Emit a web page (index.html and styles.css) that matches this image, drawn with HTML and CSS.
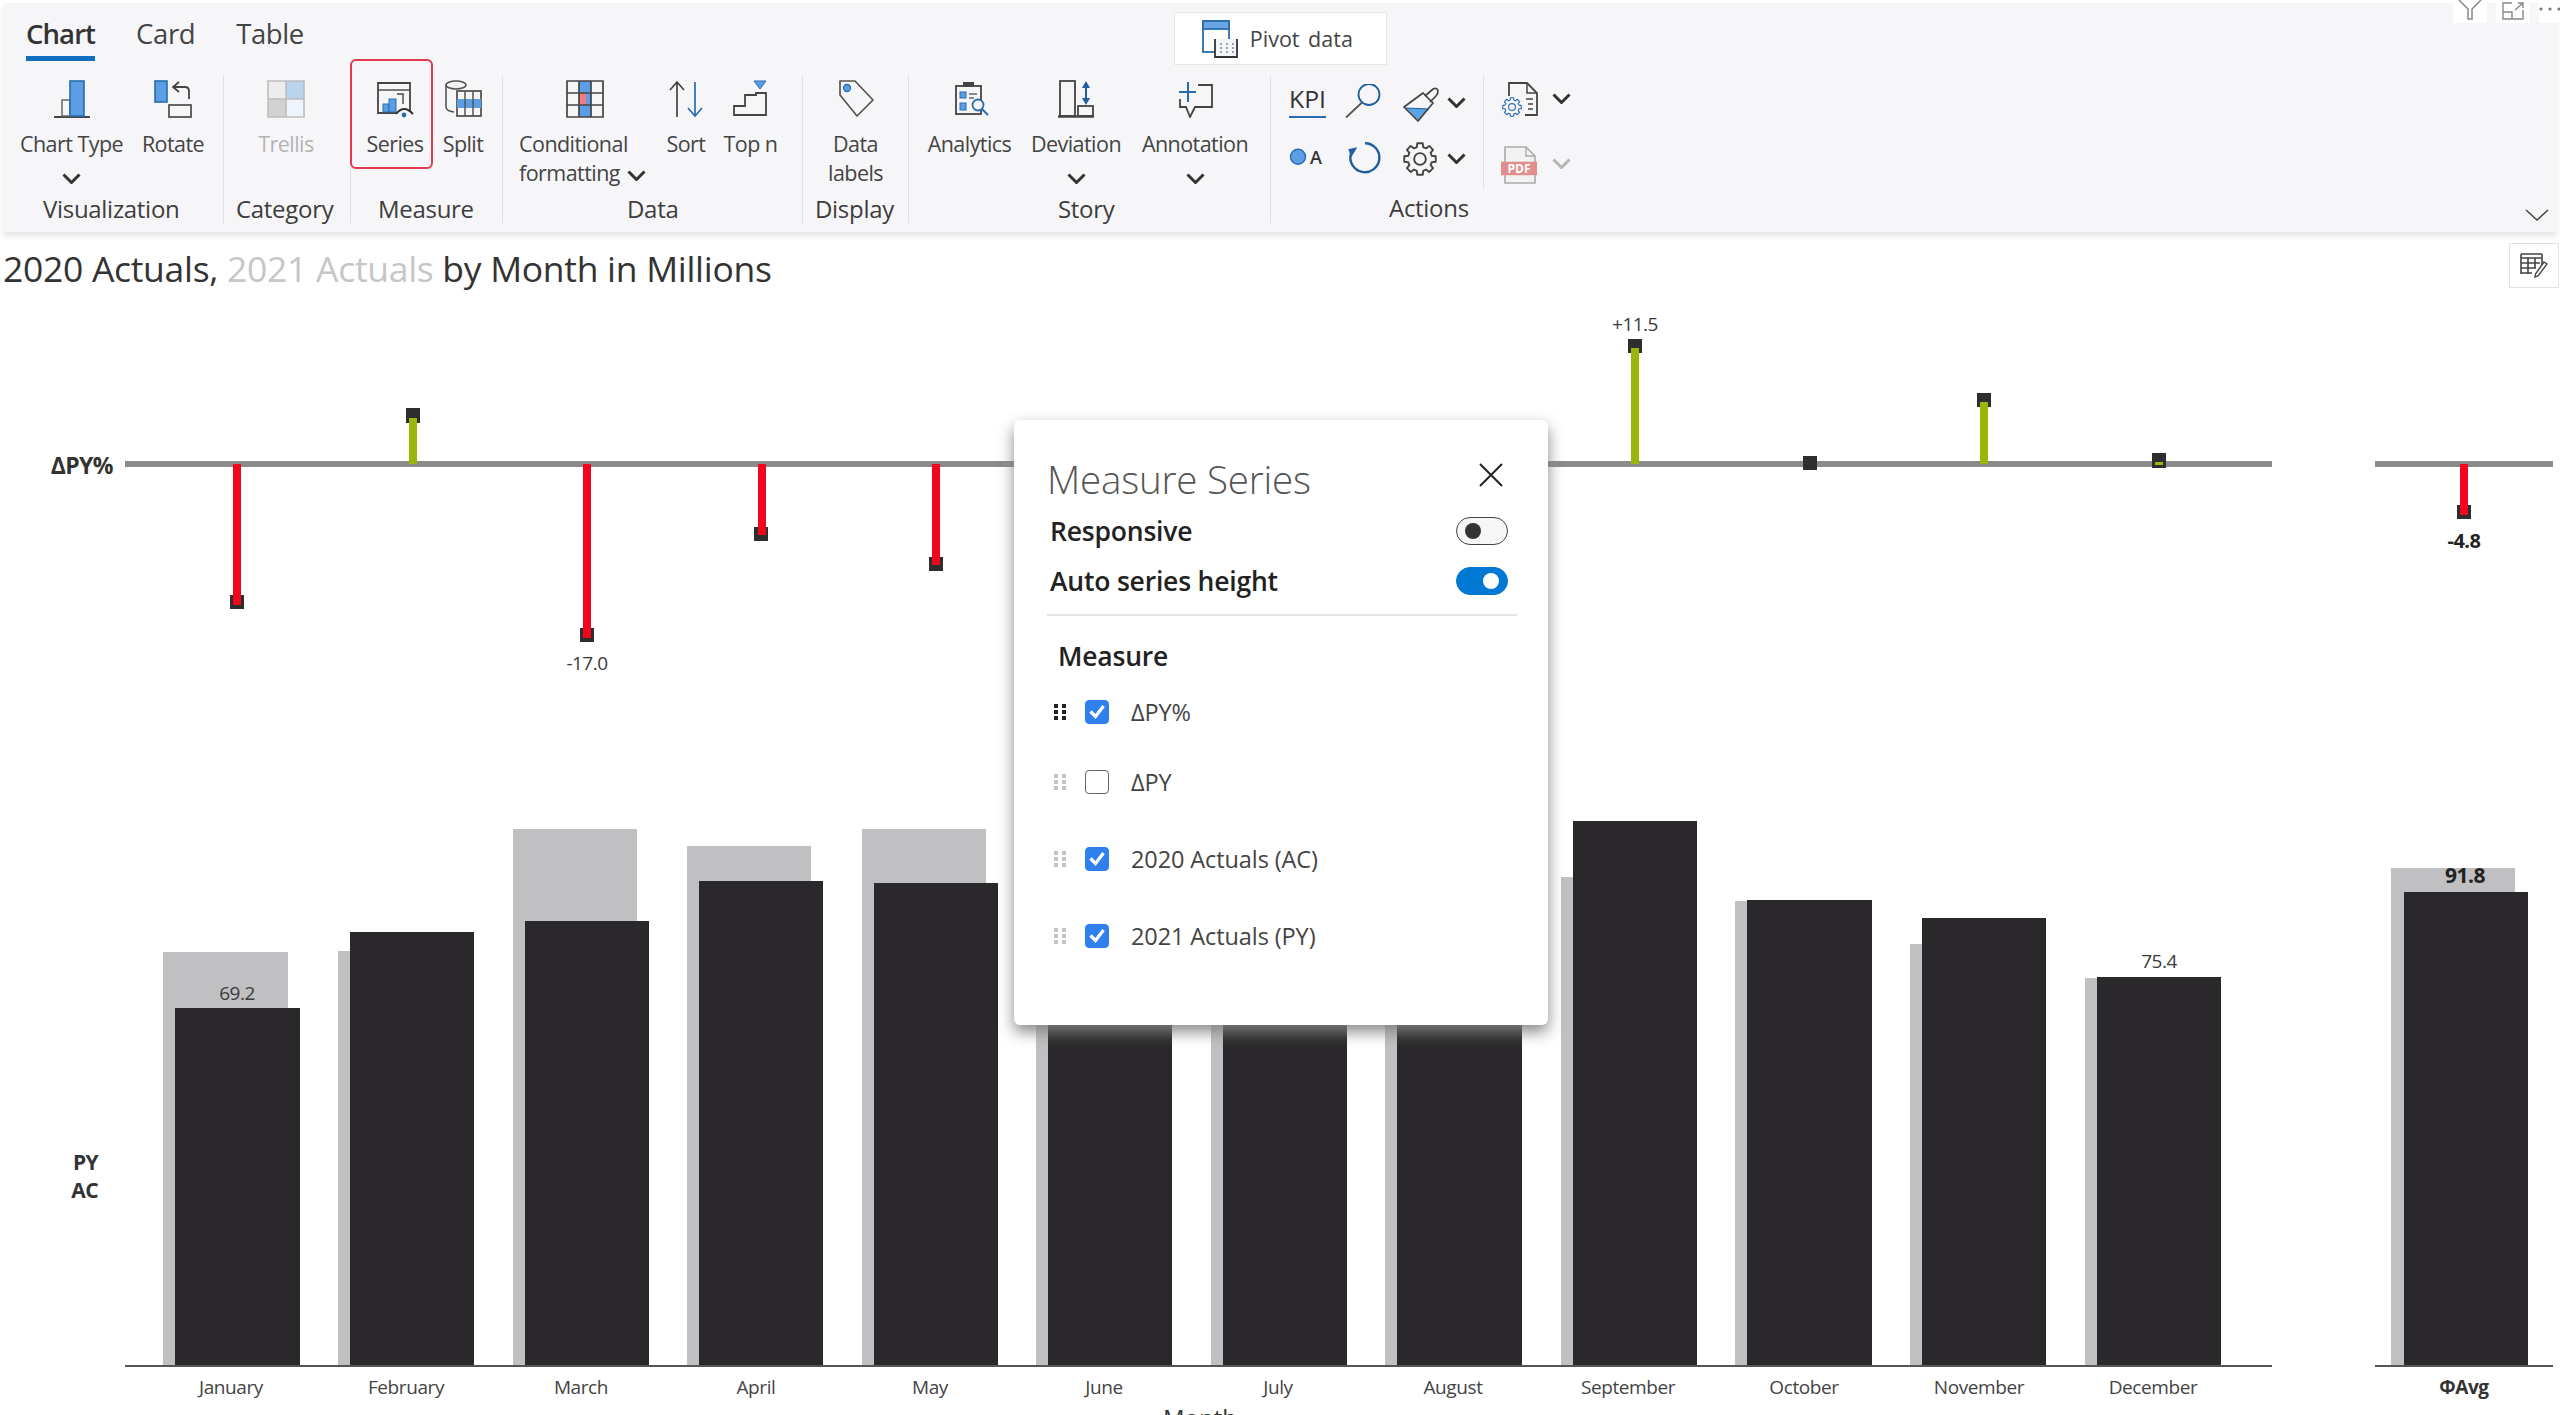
FILE: index.html
```html
<!DOCTYPE html>
<html lang="en">
<head>
<meta charset="utf-8">
<title>Measure Series</title>
<link rel="stylesheet" href="styles.css">
</head>
<body>
<svg class="defs" width="0" height="0" aria-hidden="true">
  <symbol id="gear" viewBox="-16 -16 32 32">
    <polygon fill="none" stroke="currentColor" stroke-width="1.8" stroke-linejoin="round" points="-3,-11.1 -2.6,-14.8 2.6,-14.8 3,-11.1 5.73,-9.97 8.63,-12.3 12.3,-8.63 9.97,-5.73 11.1,-3 14.8,-2.6 14.8,2.6 11.1,3 9.97,5.73 12.3,8.63 8.63,12.3 5.73,9.97 3,11.1 2.6,14.8 -2.6,14.8 -3,11.1 -5.73,9.97 -8.63,12.3 -12.3,8.63 -9.97,5.73 -11.1,3 -14.8,2.6 -14.8,-2.6 -11.1,-3 -9.97,-5.73 -12.3,-8.63 -8.63,-12.3 -5.73,-9.97"/>
    <circle r="5.5" fill="none" stroke="currentColor" stroke-width="1.8"/>
  </symbol>
  <symbol id="chev" viewBox="0 0 19 11">
    <polyline points="1.5,1.5 9.5,9.500 17.5,1.5" fill="none" stroke="currentColor" stroke-width="3"/>
  </symbol>
  <symbol id="grip" viewBox="0 0 12 16">
    <rect x="0" y="0" width="4" height="4"/><rect x="8" y="0" width="4" height="4"/>
    <rect x="0" y="6" width="4" height="4"/><rect x="8" y="6" width="4" height="4"/>
    <rect x="0" y="12" width="4" height="4"/><rect x="8" y="12" width="4" height="4"/>
  </symbol>
  <symbol id="tick" viewBox="0 0 24 24">
    <polyline points="5.5,12.5 10.5,17.5 18.5,7" fill="none" stroke="#fff" stroke-width="3.2"/>
  </symbol>
</svg>

<div class="page">
  <header class="ribbon">
    <div class="ribbon-head">
      <nav class="tabs">
        <span class="tab active">Chart</span>
        <span class="tab">Card</span>
        <span class="tab">Table</span>
      </nav>
      <div class="pivot">
        <svg class="pivot-ico" viewBox="0 0 36 38">
          <rect x="1" y="1" width="26" height="31" fill="#fff" stroke="#2a6cad" stroke-width="1.8"/>
          <rect x="1" y="1" width="26" height="8" fill="#6aa5e3" stroke="#2a6cad" stroke-width="1.8"/>
          <rect x="13" y="19" width="22" height="18" fill="#f6f6f8"/>
          <path d="M13 19V37H35V19" fill="none" stroke="#333" stroke-width="1.8"/>
          <path d="M18 24h2M24 24h2M30 24h2M18 28h2M24 28h2M30 28h2M18 32h2M24 32h2M30 32h2" stroke="#8fa8c4" stroke-width="2"/>
        </svg>
        <span class="pivot-text">Pivot data</span>
      </div>
    </div>

    <div class="ribbon-body">
      <section class="group g-vis">
        <div class="tools">
          <div class="tool w-type">
            <svg class="ico" viewBox="0 0 38 38"><path d="M1 37H37" stroke="#444" stroke-width="2"/><rect x="9" y="20" width="8" height="16" fill="none" stroke="#666" stroke-width="1.5"/><rect x="17" y="1" width="14" height="35" fill="#5b9ee6" stroke="#2a6cad" stroke-width="1.6"/></svg>
            <span class="lbl">Chart Type</span>
            <svg class="chev"><use href="#chev"/></svg>
          </div>
          <div class="tool w-rotate">
            <svg class="ico" viewBox="0 0 38 38"><rect x="1" y="1" width="12" height="21" fill="#5b9ee6" stroke="#2a6cad" stroke-width="1.6"/><rect x="15" y="25" width="22" height="12" fill="none" stroke="#555" stroke-width="1.8"/><path d="M35 19V11Q35 7 31 7H20M25 2L19 7L25 12" fill="none" stroke="#444" stroke-width="1.8"/></svg>
            <span class="lbl">Rotate</span>
          </div>
        </div>
        <div class="group-label lab-vis">Visualization</div>
      </section>

      <section class="group g-cat">
        <div class="tools">
          <div class="tool w-trellis">
            <svg class="ico" viewBox="0 0 38 38"><rect x="1" y="1" width="18" height="18" fill="#ededed"/><rect x="19" y="1" width="18" height="18" fill="#b8d4ee"/><rect x="1" y="19" width="18" height="18" fill="#d2d2d2"/><rect x="19" y="19" width="18" height="18" fill="#eef4fb"/><path d="M1 1H37V37H1ZM19 1V37M1 19H37" fill="none" stroke="#bdbdbd" stroke-width="1.6"/></svg>
            <span class="lbl muted">Trellis</span>
          </div>
        </div>
        <div class="group-label lab-cat">Category</div>
      </section>

      <section class="group g-mea">
        <div class="series-mark"></div>
        <div class="tools">
          <div class="tool w-series">
            <svg class="ico" viewBox="0 0 38 38"><path d="M2 3H34V33H2Z" fill="none" stroke="#444" stroke-width="1.8"/><path d="M2 10H34" stroke="#444" stroke-width="1.4"/><rect x="7" y="24" width="6" height="8" fill="#5b9ee6" stroke="#2a6cad"/><rect x="13" y="19" width="7" height="13" fill="#5b9ee6" stroke="#2a6cad"/><path d="M21 14H27V24" fill="none" stroke="#444" stroke-width="1.4"/><path d="M20 34Q28 24 37 34" fill="#f6f6f8" stroke="#333" stroke-width="2"/><circle cx="28" cy="35" r="2.4" fill="#2a6cad"/></svg>
            <span class="lbl">Series</span>
          </div>
          <div class="tool w-split">
            <svg class="ico" viewBox="0 0 38 38"><ellipse cx="12" cy="5" rx="10" ry="4" fill="none" stroke="#555" stroke-width="1.6"/><path d="M2 5V27Q2 31 10 32" fill="none" stroke="#555" stroke-width="1.6"/><rect x="13" y="11" width="24" height="25" fill="#f6f6f8" stroke="#555" stroke-width="1.8"/><rect x="13" y="19" width="24" height="9" fill="#5b9ee6"/><path d="M21 11V36M29 11V36" stroke="#555" stroke-width="1.5"/></svg>
            <span class="lbl">Split</span>
          </div>
        </div>
        <div class="group-label lab-mea">Measure</div>
      </section>

      <section class="group g-data">
        <div class="tools">
          <div class="tool w-cf">
            <svg class="ico" viewBox="0 0 38 38"><rect x="1" y="1" width="36" height="36" fill="#f6f6f8"/><rect x="13" y="1" width="12" height="12" fill="#5b9ee6"/><rect x="13" y="13" width="7" height="12" fill="#f47c7c"/><rect x="20" y="13" width="5" height="12" fill="#5b9ee6"/><rect x="13" y="25" width="12" height="12" fill="#5b9ee6"/><path d="M1 1H37V37H1ZM13 1V37M25 1V37M1 13H37M1 25H37" fill="none" stroke="#444" stroke-width="1.7"/></svg>
            <span class="lbl">Conditional</span>
            <span class="lbl">formatting <svg class="chev inline"><use href="#chev"/></svg></span>
          </div>
          <div class="tool w-sort">
            <svg class="ico" viewBox="0 0 38 38"><path d="M10 37V2M3 10L10 2L17 10" fill="none" stroke="#444" stroke-width="1.7"/><path d="M28 2V36M21 28L28 36L35 28" fill="none" stroke="#2a6cad" stroke-width="1.7"/></svg>
            <span class="lbl">Sort</span>
          </div>
          <div class="tool w-top">
            <svg class="ico" viewBox="0 0 38 38"><polygon points="22,1 34,1 28,9" fill="#5b9ee6" stroke="#2a6cad"/><path d="M2 35V26H13V15H24V13H34V35Z" fill="none" stroke="#444" stroke-width="1.8"/></svg>
            <span class="lbl">Top n</span>
          </div>
        </div>
        <div class="group-label lab-data">Data</div>
      </section>

      <section class="group g-dis">
        <div class="tools">
          <div class="tool w-dl">
            <svg class="ico" viewBox="0 0 38 38"><path d="M3 1H18L36 20L20 36L3 15Z" fill="none" stroke="#555" stroke-width="1.7" stroke-linejoin="round"/><circle cx="10" cy="8" r="3.5" fill="#5b9ee6" stroke="#2a6cad" stroke-width="1.3"/></svg>
            <span class="lbl">Data</span>
            <span class="lbl">labels</span>
          </div>
        </div>
        <div class="group-label lab-dis">Display</div>
      </section>

      <section class="group g-story">
        <div class="tools">
          <div class="tool w-ana">
            <svg class="ico" viewBox="0 0 38 38"><rect x="5" y="6" width="25" height="28" fill="none" stroke="#444" stroke-width="1.8"/><rect x="12" y="2" width="11" height="5" fill="#444"/><rect x="9" y="12" width="6" height="6" fill="#5b9ee6" stroke="#2a6cad"/><rect x="9" y="23" width="6" height="7" fill="#5b9ee6" stroke="#2a6cad"/><path d="M18 14H26M18 18H23" stroke="#666" stroke-width="1.5"/><circle cx="27" cy="25" r="5.5" fill="#f6f6f8" stroke="#2a6cad" stroke-width="1.8"/><path d="M31 29L37 35" stroke="#2a6cad" stroke-width="2"/></svg>
            <span class="lbl">Analytics</span>
          </div>
          <div class="tool w-dev">
            <svg class="ico" viewBox="0 0 38 38"><rect x="3" y="1" width="15" height="35" fill="none" stroke="#444" stroke-width="1.8"/><rect x="21" y="26" width="15" height="10" fill="none" stroke="#444" stroke-width="1.8"/><path d="M1 36.5H37" stroke="#444" stroke-width="2.4"/><path d="M29 5V21" stroke="#1f5f9f" stroke-width="2"/><polygon points="29,1 25,8 33,8" fill="#1f5f9f"/><polygon points="29,25 25,18 33,18" fill="#1f5f9f"/></svg>
            <span class="lbl">Deviation</span>
            <svg class="chev"><use href="#chev"/></svg>
          </div>
          <div class="tool w-anno">
            <svg class="ico" viewBox="0 0 38 38"><path d="M12 2V22M3 12H20" stroke="#2a6cad" stroke-width="2"/><path d="M22 5H36V27H19L14 37L10 27H4V19" fill="none" stroke="#444" stroke-width="1.8"/></svg>
            <span class="lbl">Annotation</span>
            <svg class="chev"><use href="#chev"/></svg>
          </div>
        </div>
        <div class="group-label lab-story">Story</div>
      </section>

      <section class="group g-act">
        <div class="act-top">
          <div class="act-grid">
            <svg class="act-ico over" viewBox="0 0 38 38"><text class="kpi" x="0" y="24" textLength="37" lengthAdjust="spacingAndGlyphs">KPI</text><path d="M0 33H37" stroke="#2a6cad" stroke-width="2.2"/></svg>
            <svg class="act-ico" viewBox="0 0 38 38"><circle cx="24" cy="10.500" r="10.500" fill="none" stroke="#1f5f9f" stroke-width="1.8"/><path d="M17 18.500L1 33.500" stroke="#555" stroke-width="1.8"/></svg>
            <svg class="act-ico" viewBox="0 0 38 38"><path d="M22 12L30 5Q34 3 35 7Q35 10 33 12L27 18" fill="none" stroke="#444" stroke-width="1.7"/><polygon points="3,24 26,25 15,36" fill="#5aa3e6"/><path d="M1 23L20 9L30 19L15 37Z" fill="none" stroke="#444" stroke-width="1.7" stroke-linejoin="round"/><path d="M3 24L26 25" stroke="#1f5f9f" stroke-width="1.2"/></svg>
            <svg class="chev"><use href="#chev"/></svg>
            <svg class="act-ico" viewBox="0 0 38 38"><circle cx="9" cy="16.700" r="7.500" fill="#5b9ee6" stroke="#2a6cad" stroke-width="1.400"/><text class="oa" x="21" y="24">A</text></svg>
            <svg class="act-ico" viewBox="0 0 38 38"><path d="M20 3.200A14.500 14.500 0 1 1 6 13.500" fill="none" stroke="#1f5f9f" stroke-width="2.400"/><polygon points="3.300,9.300 12.300,7.300 6.300,17.300" fill="#1f5f9f"/></svg>
            <svg class="act-ico gear"><use href="#gear"/></svg>
            <svg class="chev"><use href="#chev"/></svg>
          </div>
          <div class="act-side">
            <div class="side-row">
              <svg class="act-ico over" viewBox="0 0 38 38"><path d="M5 14V1H23L33 11V33H21" fill="none" stroke="#444" stroke-width="1.8"/><path d="M23 1V11H33" fill="none" stroke="#444" stroke-width="1.500"/><path d="M22 17H29M24 22H29M24 27H29" stroke="#444" stroke-width="1.600"/><svg x="-2" y="15" width="20" height="20" viewBox="-16 -16 32 32"><use href="#gear" x="-16" y="-16" width="32" height="32" class="blue"/></svg></svg>
              <svg class="chev up"><use href="#chev"/></svg>
            </div>
            <div class="side-row low">
              <svg class="act-ico over" viewBox="0 0 38 38"><path d="M1 1H22L31 10V37H1Z" fill="#f2f2f2" stroke="#aaa" stroke-width="1.600"/><path d="M22 1V10H31" fill="none" stroke="#aaa" stroke-width="1.400"/><rect x="-3" y="15.700" width="36" height="13.500" fill="#e08d8d"/><text class="pdf" x="15" y="26.700">PDF</text></svg>
              <svg class="chev faint"><use href="#chev"/></svg>
            </div>
          </div>
        </div>
        <div class="act-foot">
          <div class="group-label lab-act">Actions</div>
          <svg class="expand" viewBox="0 0 24 12"><polyline points="1,1 12,11 23,1" fill="none" stroke="#444" stroke-width="1.5"/></svg>
        </div>
      </section>
    </div>
  </header>

  <div class="title-row">
    <h1 class="title">2020 Actuals, <span class="title-py">2021 Actuals</span> by Month in Millions</h1>
    <div class="edit-btn">
      <svg class="edit-ico" viewBox="0 0 28 25"><path d="M1 1H22M1 5H22M1 10H20M1 15H16M1 20H12M1 1V21M8 5V21M15 5V15M22 1V12" fill="none" stroke="#444" stroke-width="1.6"/><path d="M24 9L27 11L18 23L15 24L15.500 21Z" fill="#fff" stroke="#444" stroke-width="1.4"/></svg>
    </div>
  </div>

  <svg class="chart" viewBox="0 290 2560 1125">
    <!-- delta axis -->
    <rect class="zero" x="125" y="461" width="2147" height="6"/>
    <rect class="zero" x="2375" y="461" width="178" height="6"/>

    <rect class="mark" x="230" y="595" width="14" height="14"/><rect class="neg" x="233" y="464" width="8" height="141"/>
    <rect class="mark" x="406" y="408" width="14" height="15"/><rect class="pos" x="409" y="418" width="8" height="46"/>
    <rect class="mark" x="580" y="628" width="14" height="14"/><rect class="neg" x="583" y="464" width="8" height="174"/>
    <rect class="mark" x="754" y="527" width="14" height="14"/><rect class="neg" x="758" y="464" width="8" height="71"/>
    <rect class="mark" x="929" y="557" width="14" height="14"/><rect class="neg" x="932" y="464" width="8" height="101"/>
    <rect class="mark" x="1628" y="339" width="14" height="14"/><rect class="pos" x="1631" y="348" width="8" height="116"/>
    <rect class="mark" x="1803" y="456" width="14" height="14"/>
    <rect class="mark" x="1977" y="393" width="14" height="14"/><rect class="pos" x="1980" y="402" width="8" height="62"/>
    <rect class="mark" x="2152" y="453" width="14" height="15"/><rect class="pos" x="2155" y="462" width="8" height="3"/>
    <rect class="mark" x="2457" y="505" width="14" height="14"/><rect class="neg" x="2460" y="464" width="8" height="51"/>

    <text class="val" x="587" y="670">-17.0</text>
    <text class="val" x="1635" y="331">+11.5</text>
    <text class="val strong" x="2464" y="548">-4.8</text>

    <text class="side big" x="113" y="474">ΔPY%</text>
    <text class="side" x="98" y="1170">PY</text>
    <text class="side" x="98" y="1198">AC</text>

    <!-- previous year -->
    <rect class="py" x="163" y="952" width="125" height="414"/>
    <rect class="py" x="338" y="951" width="125" height="415"/>
    <rect class="py" x="513" y="829" width="124" height="537"/>
    <rect class="py" x="687" y="846" width="124" height="520"/>
    <rect class="py" x="862" y="829" width="124" height="537"/>
    <rect class="py" x="1036" y="960" width="124" height="406"/>
    <rect class="py" x="1211" y="960" width="124" height="406"/>
    <rect class="py" x="1385" y="960" width="124" height="406"/>
    <rect class="py" x="1561" y="877" width="124" height="489"/>
    <rect class="py" x="1735" y="901" width="124" height="465"/>
    <rect class="py" x="1910" y="944" width="124" height="422"/>
    <rect class="py" x="2085" y="978" width="124" height="388"/>
    <rect class="py" x="2391" y="868" width="124" height="498"/>

    <!-- actuals -->
    <rect class="ac" x="175" y="1008" width="125" height="358"/>
    <rect class="ac" x="350" y="932" width="124" height="434"/>
    <rect class="ac" x="525" y="921" width="124" height="445"/>
    <rect class="ac" x="699" y="881" width="124" height="485"/>
    <rect class="ac" x="874" y="883" width="124" height="483"/>
    <rect class="ac" x="1048" y="960" width="124" height="406"/>
    <rect class="ac" x="1223" y="960" width="124" height="406"/>
    <rect class="ac" x="1397" y="960" width="125" height="406"/>
    <rect class="ac" x="1573" y="821" width="124" height="545"/>
    <rect class="ac" x="1747" y="900" width="125" height="466"/>
    <rect class="ac" x="1922" y="918" width="124" height="448"/>
    <rect class="ac" x="2097" y="977" width="124" height="389"/>
    <rect class="ac" x="2404" y="892" width="124" height="474"/>

    <rect class="base" x="125" y="1365" width="2147" height="2"/>
    <rect class="base" x="2375" y="1365" width="178" height="2"/>

    <text class="val" x="237" y="1000">69.2</text>
    <text class="val" x="2159" y="968">75.4</text>
    <text class="val strong big" x="2465" y="883">91.8</text>

    <text class="month" x="231" y="1394">January</text>
    <text class="month" x="406" y="1394">February</text>
    <text class="month" x="581" y="1394">March</text>
    <text class="month" x="756" y="1394">April</text>
    <text class="month" x="930" y="1394">May</text>
    <text class="month" x="1104" y="1394">June</text>
    <text class="month" x="1278" y="1394">July</text>
    <text class="month" x="1453" y="1394">August</text>
    <text class="month" x="1628" y="1394">September</text>
    <text class="month" x="1804" y="1394">October</text>
    <text class="month" x="1979" y="1394">November</text>
    <text class="month" x="2153" y="1394">December</text>
    <text class="month strong" x="2464" y="1394">ΦAvg</text>
    <text class="axis-title" x="1200" y="1427">Month</text>
  </svg>

  <aside class="popover">
    <div class="pop-head">
      <span class="pop-title">Measure Series</span>
      <svg class="close" viewBox="0 0 24 24"><path d="M1 1L23 23M23 1L1 23" stroke="#222" stroke-width="2"/></svg>
    </div>
    <div class="switch-row"><span class="switch-label">Responsive</span><span class="toggle"><span class="thumb"></span></span></div>
    <div class="switch-row"><span class="switch-label">Auto series height</span><span class="toggle on"><span class="thumb"></span></span></div>
    <div class="pop-rule"></div>
    <div class="pop-section">Measure</div>
    <div class="mrow"><svg class="grip dark"><use href="#grip"/></svg><span class="cb on"><svg class="tick"><use href="#tick"/></svg></span><span class="mname">ΔPY%</span></div>
    <div class="mrow"><svg class="grip"><use href="#grip"/></svg><span class="cb"></span><span class="mname">ΔPY</span></div>
    <div class="mrow tall"><svg class="grip"><use href="#grip"/></svg><span class="cb on"><svg class="tick"><use href="#tick"/></svg></span><span class="mname">2020 Actuals (AC)</span></div>
    <div class="mrow"><svg class="grip"><use href="#grip"/></svg><span class="cb on"><svg class="tick"><use href="#tick"/></svg></span><span class="mname">2021 Actuals (PY)</span></div>
  </aside>

  <div class="corner">
    <span class="corner-item"><svg class="funnel" viewBox="0 0 24 20"><path d="M1 0L10 9V19H14V9L23 0" fill="none" stroke="#888" stroke-width="1.5"/></svg></span>
    <span class="corner-item"><svg class="focus" viewBox="0 0 22 18"><path d="M10 1H1V17H21V8M1 10H10V17M13 8L21 1M16 1H21V6" fill="none" stroke="#888" stroke-width="1.4"/></svg></span>
    <span class="corner-dots"><svg class="dots" viewBox="0 0 21 4"><circle cx="2" cy="2" r="1.6"/><circle cx="11" cy="2" r="1.6"/><circle cx="20" cy="2" r="1.6"/></svg></span>
  </div>
</div>
</body>
</html>
```
FILE: styles.css
```css
* { box-sizing: border-box; }
html, body { margin: 0; padding: 0; width: 2560px; height: 1415px; overflow: hidden; background: #fff; }
body { font-family: "Open Sans", "Liberation Sans", sans-serif; color: #3a3a3a; }
.defs { position: absolute; }
.page { position: relative; width: 2560px; height: 1415px; overflow: hidden; }

/* ribbon */
.ribbon { margin: 3px 0 0 3px; width: 2554px; height: 229px; background: #f6f6f8; box-shadow: 0 5px 5px rgba(0,0,0,.09); position: relative; }
.ribbon-head { display: flex; height: 73px; padding-left: 23px; }
.tabs { display: flex; gap: 41px; padding-top: 10px; height: 58px; }
.tab { font-size: 27.500px; line-height: 42px; height: 48px; letter-spacing: -.4px; color: #444; }
.tab.active { font-weight: 600; color: #333; border-bottom: 5px solid #106ebe; letter-spacing: -.9px; }
.pivot { margin: 9px 0 0 870px; width: 213px; height: 53px; background: #fff; border: 1px solid #e7e7e7; display: flex; align-items: center; padding-left: 27px; }
.pivot-ico { width: 36px; height: 38px; flex: none; }
.pivot-text { margin-left: 12px; font-size: 21.500px; color: #444; word-spacing: 3px; }

.ribbon-body { display: flex; height: 147px; }
.group { display: flex; flex-direction: column; border-right: 1.500px solid #e0e0e2; position: relative; }
.g-vis { width: 221px; } .g-cat { width: 127px; } .g-mea { width: 152px; } .g-data { width: 300px; }
.g-dis { width: 106px; } .g-story { width: 362px; } .g-act { flex: 1; border-right: 0; }
.tools { display: flex; height: 114px; }
.tool { display: flex; flex-direction: column; align-items: center; padding-top: 4px; flex: none; }
.ico { width: 38px; height: 38px; display: block; margin-bottom: 11px; flex: none; }
.lbl { font-size: 21.500px; line-height: 29px; letter-spacing: -.55px; white-space: nowrap; color: #444; }
.lbl.muted { color: #b4b4b4; }
.chev { width: 19px; height: 11px; color: #333; display: block; margin-top: 15px; flex: none; }
.chev.inline { display: inline-block; margin: 0 0 0 2px; vertical-align: 0; }
.chev.faint { color: #b5b5b5; margin-top: -4px; }
.chev.up { margin-top: -6px; }

.g-vis .tools { padding-left: 11px; }
.w-type { width: 115px; } .w-rotate { width: 88px; }
.w-trellis { width: 124px; }
.g-mea .tools { padding-left: 2px; }
.w-series { width: 84px; } .w-split { width: 52px; }
.g-data .tools { padding-left: 16px; }
.w-cf { width: 133px; align-items: flex-start; } .w-cf .ico { margin-left: 47px; }
.w-sort { width: 68px; } .w-top { width: 61px; }
.w-dl { width: 105px; }
.g-story .tools { padding-left: 8px; }
.w-ana { width: 105px; } .w-dev { width: 108px; } .w-anno { width: 130px; }

.series-mark { position: absolute; left: -1px; top: -17px; width: 83px; height: 110px; border: 2px solid #e5394f; border-radius: 6px; pointer-events: none; }

.group-label { font-size: 24px; line-height: 28px; margin-top: 5px; color: #3d3d3d; letter-spacing: -.3px; white-space: nowrap; }
.lab-vis { margin-left: 40px; } .lab-cat { margin-left: 12px; } .lab-mea { margin-left: 27px; }
.lab-data { margin-left: 124px; } .lab-dis { margin-left: 12px; } .lab-story { margin-left: 149px; }

/* actions */
.act-top { display: flex; height: 114px; }
.act-grid { width: 213px; height: 112px; display: grid; grid-template-columns: 56px 58px 44px 19px; grid-template-rows: 54px 58px; align-items: center; padding-left: 18px; border-right: 1.500px solid #e0e0e2; }
.act-ico { width: 38px; height: 38px; display: block; }
.act-ico.over { overflow: visible; }
.act-grid .chev { margin-top: -2px; }
.gear { color: #444; width: 34px; height: 34px; }
.blue { color: #2a6cad; }
.kpi { font-size: 24px; font-weight: 500; fill: #333; font-family: "Open Sans", sans-serif; }
.oa { font-size: 18px; font-weight: 600; fill: #333; }
.pdf { font-size: 12px; font-weight: 700; fill: #fff; text-anchor: middle; }
.act-side { padding: 6px 0 0 20px; }
.side-row { display: flex; align-items: center; gap: 10px; height: 38px; }
.side-row.low { margin-top: 26px; }
.act-foot { display: flex; }
.lab-act { margin-left: 118px; margin-top: 4px; }
.expand { width: 24px; height: 12px; margin: 19px 8px 0 auto; }

/* title */
.title-row { display: flex; align-items: flex-start; height: 58px; padding: 11px 1px 0 3px; }
.title { margin: 0; font-size: 35.500px; line-height: 50px; font-weight: 400; color: #333; letter-spacing: -.3px; white-space: nowrap; }
.title-py { color: #c6c6c6; }
.edit-btn { margin-left: auto; width: 50px; height: 45px; border: 1px solid #e2e2e2; display: flex; align-items: center; justify-content: center; background: #fff; }
.edit-ico { width: 28px; height: 25px; }

/* chart */
.chart { display: block; width: 2560px; height: 1125px; }
.zero { fill: #8b8b8b; }
.mark { fill: #2e2e2e; }
.neg { fill: #f2061e; }
.pos { fill: #9db40a; }
.py { fill: #c0bfc1; }
.ac { fill: #2a282a; }
.base { fill: #555; }
.val { font-size: 19px; letter-spacing: -.5px; fill: #3a3a3a; text-anchor: middle; }
.val.strong { font-weight: 700; fill: #222; font-size: 20px; }
.val.strong.big { font-size: 21px; }
.side { font-size: 21px; font-weight: 700; letter-spacing: -.6px; fill: #333; text-anchor: end; }
.side.big { font-size: 23px; }
.month { font-size: 19px; letter-spacing: -.4px; fill: #444; text-anchor: middle; }
.month.strong { font-weight: 700; fill: #333; }
.axis-title { font-size: 24px; font-weight: 500; fill: #333; text-anchor: middle; }

/* popover */
.popover { position: absolute; left: 1014px; top: 420px; width: 534px; height: 605px; background: #fff; border-radius: 6px; box-shadow: 0 7px 15px rgba(130,130,130,.95); padding: 32px 32px 0 33px; }
.pop-head { display: flex; justify-content: space-between; align-items: center; height: 54px; }
.pop-title { font-size: 38.500px; line-height: 54px; font-weight: 300; color: #555; letter-spacing: -.2px; }
.close { width: 24px; height: 24px; margin: -8px 13px 0 0; }
.switch-row { display: flex; justify-content: space-between; align-items: center; height: 50px; padding-left: 3px; margin-right: 8px; }
.switch-label { font-size: 26.500px; font-weight: 600; color: #222; letter-spacing: -.2px; }
.toggle { width: 52px; height: 28px; border-radius: 14px; border: 1.500px solid #444; background: #f6f6f6; display: flex; align-items: center; padding: 0 8px; }
.toggle.on { background: #0078d4; border-color: #0078d4; justify-content: flex-end; }
.thumb { width: 16px; height: 16px; border-radius: 50%; background: #333; }
.toggle.on .thumb { background: #fff; }
.pop-rule { height: 1.500px; background: #e6e6e6; margin: 8px 0 0 0; width: 470px; }
.pop-section { font-size: 26.500px; line-height: 35px; font-weight: 600; color: #222; margin: 23px 0 3px 11px; letter-spacing: -.2px; }
.mrow { display: flex; align-items: center; height: 70px; margin-left: 7px; }
.mrow.tall { height: 84px; }
.grip { width: 12px; height: 16px; fill: #c4c4c4; flex: none; }
.grip.dark { fill: #222; }
.cb { width: 24px; height: 24px; margin-left: 19px; border-radius: 4px; border: 1.500px solid #666; background: #fff; flex: none; }
.cb.on { background: #2f80ed; border-color: #2f80ed; }
.tick { width: 24px; height: 24px; display: block; margin: -1.500px; }
.mname { margin-left: 22px; font-size: 23.500px; color: #444; letter-spacing: -.1px; white-space: nowrap; }

/* corner */
.corner { position: absolute; right: 0; top: 0; display: flex; gap: 9px; }
.corner-item { display: flex; justify-content: center; align-items: flex-start; width: 34px; height: 23px; background: #fff; }
.funnel { width: 24px; height: 20px; display: block; }
.focus { width: 22px; height: 18px; display: block; margin-top: 2px; }
.corner-dots { display: block; width: 21px; height: 23px; padding-top: 7px; background: #fff; }
.dots { display: block; width: 21px; height: 4px; fill: #777; }
```
